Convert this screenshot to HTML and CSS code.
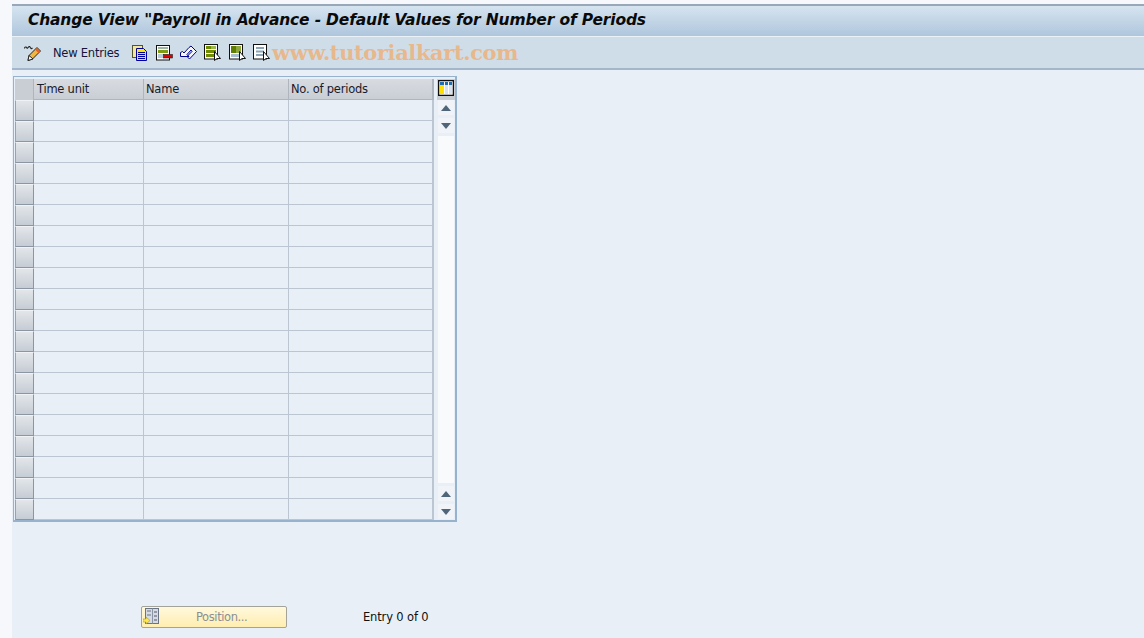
FILE: index.html
```html
<!DOCTYPE html>
<html lang="en">
<head>
<meta charset="utf-8">
<title>Change View</title>
<link rel="stylesheet" href="styles.css">
</head>
<body>
<div class="screen">
  <header class="titlebar"><h1>Change View "Payroll in Advance - Default Values for Number of Periods</h1></header>
  <div class="toolbar">
    <svg class="ic pencil" width="18" height="18" viewBox="0 0 18 18"><path d="M1.500 4.500c0-2 2-2 2.500-.5s2-3 3-1 1.500 2 2.500 1" fill="none" stroke="#222" stroke-width="1.100"/><path d="M5 16.500l1-5 8-8 3.500 3.500-8 8z" fill="#f4b63a" stroke="#222" stroke-linejoin="round"/><path d="M5 16.500l1-5 4 3.500z" fill="#fff" stroke="#222" stroke-linejoin="round"/><path d="M13 5l3.500 3.500" stroke="#e0602e" stroke-width="2.200"/></svg>
    <span class="newentries">New Entries</span>
    <svg class="ic copy" width="16" height="16" viewBox="0 0 16 16"><rect x=".5" y=".5" width="10" height="12" fill="#f2e6a0" stroke="#55552a"/><path d="M4.500 3.500h7l3 3v9h-10z" fill="#ffe800" stroke="#00009c"/><path d="M6 7.500h7M6 9.500h7M6 11.500h7M6 13.500h7" stroke="#00009c"/></svg>
    <svg class="ic delete" width="17" height="16" viewBox="0 0 17 16"><rect x=".5" y=".5" width="13" height="14.500" fill="#fff" stroke="#111"/><rect x="2" y="2" width="10" height="2" fill="#9ab6a2"/><rect x="2" y="5" width="10" height="3" fill="#7f9d12"/><rect x="2" y="9" width="10" height="4" fill="#b9cad9"/><rect x="7.500" y="9.500" width="9" height="3.500" fill="#e00000" stroke="#222" stroke-width=".6"/></svg>
    <svg class="ic undo" width="17" height="15" viewBox="0 0 17 15"><path d="M.5 7.500l2-1L4 8l5-5.500 2-1.500 5.500 5.500-7 7.500-2.500-2.500 5-5-1-1.500-4 4.500 2 2H.5z" fill="#f6f9fc" stroke="#00008c" stroke-linejoin="round"/></svg>
    <svg class="ic sel" width="17" height="17" viewBox="0 0 17 17"><rect x=".5" y=".5" width="13" height="14.500" fill="#fff" stroke="#111"/><rect x="2" y="2" width="10" height="3" fill="#6f8c00"/><rect x="2" y="6" width="10" height="3" fill="#6f8c00"/><rect x="2" y="10" width="10" height="3" fill="#6f8c00"/><rect x="7" y="2" width="5" height="3" fill="#9cb548"/><path d="M10.500 7.500v9l2.500-2h3.500z" fill="#fff" stroke="#111" stroke-linejoin="round"/></svg>
    <svg class="ic selall" width="17" height="17" viewBox="0 0 17 17"><rect x=".5" y=".5" width="13" height="14.500" fill="#fff" stroke="#111"/><rect x="2" y="2" width="10" height="7" fill="#5f7d00"/><rect x="7" y="2" width="5" height="7" fill="#8fa83c"/><rect x="2" y="10" width="10" height="3" fill="#a9bdd0"/><path d="M10.500 7.500v9l2.500-2h3.500z" fill="#fff" stroke="#111" stroke-linejoin="round"/></svg>
    <svg class="ic desel" width="17" height="17" viewBox="0 0 17 17"><rect x=".5" y=".5" width="13" height="14.500" fill="#fff" stroke="#111"/><path d="M3 3h8v2H3zM3 6.500h8v2H3zM3 10h8v2H3z" fill="#8ca4b8"/><path d="M10.500 7.500v9l2.500-2h3.500z" fill="#fff" stroke="#111" stroke-linejoin="round"/></svg>
    <span class="watermark">www.tutorialkart.com</span>
  </div>
  <main class="content">
    <div class="table">
      <div class="grid">
        <div class="row head">
          <div class="sel-cell corner"></div>
          <div class="cell c1">Time unit</div>
          <div class="cell c2">Name</div>
          <div class="cell c3">No. of periods</div>
        </div>
        <div class="row"><div class="sel-cell"></div><div class="cell c1"></div><div class="cell c2"></div><div class="cell c3"></div></div>
        <div class="row"><div class="sel-cell"></div><div class="cell c1"></div><div class="cell c2"></div><div class="cell c3"></div></div>
        <div class="row"><div class="sel-cell"></div><div class="cell c1"></div><div class="cell c2"></div><div class="cell c3"></div></div>
        <div class="row"><div class="sel-cell"></div><div class="cell c1"></div><div class="cell c2"></div><div class="cell c3"></div></div>
        <div class="row"><div class="sel-cell"></div><div class="cell c1"></div><div class="cell c2"></div><div class="cell c3"></div></div>
        <div class="row"><div class="sel-cell"></div><div class="cell c1"></div><div class="cell c2"></div><div class="cell c3"></div></div>
        <div class="row"><div class="sel-cell"></div><div class="cell c1"></div><div class="cell c2"></div><div class="cell c3"></div></div>
        <div class="row"><div class="sel-cell"></div><div class="cell c1"></div><div class="cell c2"></div><div class="cell c3"></div></div>
        <div class="row"><div class="sel-cell"></div><div class="cell c1"></div><div class="cell c2"></div><div class="cell c3"></div></div>
        <div class="row"><div class="sel-cell"></div><div class="cell c1"></div><div class="cell c2"></div><div class="cell c3"></div></div>
        <div class="row"><div class="sel-cell"></div><div class="cell c1"></div><div class="cell c2"></div><div class="cell c3"></div></div>
        <div class="row"><div class="sel-cell"></div><div class="cell c1"></div><div class="cell c2"></div><div class="cell c3"></div></div>
        <div class="row"><div class="sel-cell"></div><div class="cell c1"></div><div class="cell c2"></div><div class="cell c3"></div></div>
        <div class="row"><div class="sel-cell"></div><div class="cell c1"></div><div class="cell c2"></div><div class="cell c3"></div></div>
        <div class="row"><div class="sel-cell"></div><div class="cell c1"></div><div class="cell c2"></div><div class="cell c3"></div></div>
        <div class="row"><div class="sel-cell"></div><div class="cell c1"></div><div class="cell c2"></div><div class="cell c3"></div></div>
        <div class="row"><div class="sel-cell"></div><div class="cell c1"></div><div class="cell c2"></div><div class="cell c3"></div></div>
        <div class="row"><div class="sel-cell"></div><div class="cell c1"></div><div class="cell c2"></div><div class="cell c3"></div></div>
        <div class="row"><div class="sel-cell"></div><div class="cell c1"></div><div class="cell c2"></div><div class="cell c3"></div></div>
        <div class="row"><div class="sel-cell"></div><div class="cell c1"></div><div class="cell c2"></div><div class="cell c3"></div></div>
      </div>
      <div class="side">
        <div class="config"><svg width="16" height="16" viewBox="0 0 16 16"><rect x=".5" y=".5" width="15" height="15" fill="#fff" stroke="#111"/><rect x="1" y="1" width="14" height="14" fill="none" stroke="#111" stroke-width=".6"/><rect x="2" y="2" width="4" height="3" fill="#1f6fb0"/><rect x="7" y="2" width="3" height="3" fill="#1f6fb0"/><rect x="11" y="2" width="3" height="3" fill="#1f6fb0"/><rect x="2" y="5" width="4" height="9" fill="#ffe000"/><rect x="7" y="5" width="3" height="9" fill="#d6e2ee"/><rect x="11" y="5" width="3" height="9" fill="#d6e2ee"/></svg></div>
        <div class="scrollbar">
          <div class="sb-btn"><span class="arrow up"></span></div>
          <div class="sb-btn"><span class="arrow down"></span></div>
          <div class="sb-track"></div>
          <div class="sb-btn"><span class="arrow up"></span></div>
          <div class="sb-btn"><span class="arrow down"></span></div>
        </div>
      </div>
    </div>
    <div class="footer">
      <div class="position-btn">
        <svg width="16" height="17" viewBox="0 0 16 17"><rect x="2.500" y=".5" width="13" height="15" fill="#d4dbe4" stroke="#6a7482"/><path d="M9.500 .5v15" stroke="#8a94a2"/><path d="M11 4h3M11 8h3M11 12h3" stroke="#556"/><path d="M4 3h4M4 7h4" stroke="#6a7482"/><path d="M0 11h3V9l4 3.500L3 16v-2H0z" fill="#ffe64d" stroke="#a89a30" stroke-width=".6"/></svg>
        <span>Position...</span>
      </div>
      <span class="entry">Entry 0 of 0</span>
    </div>
  </main>
</div>
</body>
</html>
```
FILE: styles.css
```css
* { box-sizing: border-box; }
html, body { margin: 0; padding: 0; }
body {
  width: 1144px;
  height: 638px;
  overflow: hidden;
  background: #f7f8fb;
  font-family: "Liberation Sans", Arial, sans-serif;
  font-size: 12px;
  color: #111;
}
.screen {
  margin-left: 12px;
  padding-top: 4px;
  height: 638px;
  display: flex;
  flex-direction: column;
}
.titlebar {
  height: 32px;
  flex: none;
  border-top: 2px solid #98a8b9;
  background: linear-gradient(#d6e4f0, #aec6dc);
  display: flex;
  align-items: center;
  padding: 0 0 2px 16px;
}
.titlebar h1 {
  margin: 0;
  font-family: "DejaVu Sans", sans-serif;
  font-size: 15.500px;
  font-weight: bold;
  font-style: italic;
  color: #0a0a0a;
  white-space: nowrap;
  letter-spacing: -0.17px;
}
.toolbar {
  height: 34px;
  flex: none;
  background: #cfdde8;
  border-top: 1px solid #eaf1f7;
  border-bottom: 2px solid #a3b6ca;
  display: flex;
  align-items: center;
  padding-left: 11px;
}
.ic { flex: none; display: block; }
.newentries { margin-left: 12px; color: #14143c; font-family: "DejaVu Sans", sans-serif; font-size: 11.500px; letter-spacing: -0.23px; width: 67px; white-space: nowrap; }
.copy { margin-left: 12px; }
.delete { margin-left: 8px; }
.undo { margin-left: 7px; }
.sel { margin-left: 7px; }
.selall { margin-left: 8px; }
.desel { margin-left: 7px; }
.watermark {
  margin-left: 2px;
  font-family: "DejaVu Serif", "Liberation Serif", serif;
  font-size: 21px;
  font-weight: bold;
  color: #e8b88c;
  white-space: nowrap;
  letter-spacing: -0.4px;
}
.content {
  flex: 1;
  background: #e8eff7;
  padding: 6px 0 0 1px;
  display: flex;
  flex-direction: column;
  min-height: 0;
}
.table {
  width: 444px;
  height: 446px;
  flex: none;
  border: 2px solid #97b2cd;
  border-width: 1px 2px 2px 1px;
  display: flex;
  padding: 2px 0 0 1px;
}
.grid { width: 420px; flex: none; display: flex; flex-direction: column; }
.row { display: flex; height: 21px; flex: none; }
.sel-cell {
  width: 19px;
  flex: none;
  background: linear-gradient(#e2e6ea, #c6ccd4);
  border: 1px solid #9aa3ad;
  border-color: #f0f2f5 #8c96a2 #8c96a2 #9aa3ad;
}
.corner { background: #c9ced5; border: none; border-right: 1px solid #aeb5bd; }
.cell {
  flex: none;
  border-right: 1px solid #bcc6d2;
  border-bottom: 1px solid #bcc6d2;
  padding-left: 2px;
  line-height: 20px;
  font-family: "DejaVu Sans", sans-serif;
  font-size: 11.500px;
  letter-spacing: -0.24px;
  color: #1a1a2a;
  white-space: nowrap;
}
.c1 { width: 110px; padding-left: 3px; }
.c2 { width: 145px; }
.c3 { width: 145px; border-right: 2px solid #bcc6d2; }
.head .cell { background: linear-gradient(#d8dce1, #c9ced5); border-right-color: #aeb5bd; border-bottom: 1px solid #aeb5bd; }
.side { width: 21px; flex: none; display: flex; flex-direction: column; align-items: center; }
.config {
  width: 18px;
  height: 21px;
  flex: none;
  background: #c9ced5;
  display: flex;
  align-items: flex-start;
  justify-content: center;
  padding-top: 1px;
}
.scrollbar { flex: 1; width: 16px; display: flex; flex-direction: column; gap: 3px; padding: 0 0 1px 0; }
.sb-btn { height: 15px; flex: none; background: #f0f4f8; display: flex; align-items: center; justify-content: center; }
.sb-track { flex: 1; background: #f8fafc; }
.arrow { width: 0; height: 0; border-left: 5px solid transparent; border-right: 5px solid transparent; }
.arrow.up { border-bottom: 6px solid #4f6579; }
.arrow.down { border-top: 6px solid #4f6579; }
.footer {
  display: flex;
  align-items: center;
  margin-top: 83px;
  padding-left: 128px;
  height: 23px;
}
.position-btn {
  width: 146px;
  height: 22px;
  background: linear-gradient(#fff8dc, #ffeeb0);
  border: 1px solid #a3a39a;
  border-radius: 2px;
  display: flex;
  align-items: center;
  padding-left: 1px;
}
.position-btn span {
  margin-left: 37px;
  color: #8a8f94;
  font-family: "DejaVu Sans", sans-serif;
  font-size: 11.500px;
  letter-spacing: -0.4px;
}
.entry {
  margin-left: 76px;
  font-family: "DejaVu Sans", sans-serif;
  font-size: 11.500px;
  letter-spacing: -0.15px;
  color: #111;
}
```
